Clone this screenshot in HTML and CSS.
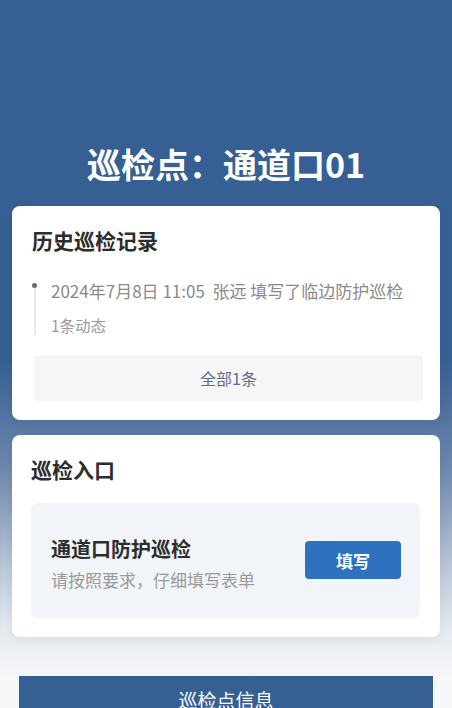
FILE: index.html
```html
<!DOCTYPE html>
<html lang="zh-CN">
<head>
<meta charset="utf-8">
<title>巡检点：通道口01</title>
<link rel="stylesheet" href="styles.css">
</head>
<body>
<div class="page">
  <header class="header">
    <h1 class="title">巡检点：通道口01</h1>
  </header>

  <section class="card card-history">
    <h2 class="card-title">历史巡检记录</h2>
    <div class="timeline">
      <div class="timeline-item">
        <span class="dot"></span>
        <div class="item-main">2024年7月8日 11:05&nbsp;&nbsp;张远 填写了临边防护巡检</div>
        <div class="item-sub">1条动态</div>
      </div>
    </div>
    <button class="all-btn" type="button">全部1条</button>
  </section>

  <section class="card card-entry">
    <h2 class="card-title">巡检入口</h2>
    <div class="entry-box">
      <div class="entry-text">
        <div class="entry-name">通道口防护巡检</div>
        <div class="entry-desc">请按照要求，仔细填写表单</div>
      </div>
      <button class="fill-btn" type="button">填写</button>
    </div>
  </section>

  <div class="info-bar">巡检点信息</div>
</div>
</body>
</html>
```

FILE: styles.css
```css
html, body {
  margin: 0;
  padding: 0;
}
body {
  font-family: "Noto Sans CJK SC", "Noto Sans", sans-serif;
  background: linear-gradient(to bottom, #365f93 0, #365f93 360px, #6f88ad 470px, #bcc8d9 570px, #e6eaf0 630px, #f6f7f9 680px, #f7f8fa 708px);
  min-height: 708px;
  overflow: hidden;
}
.page {
  display: flex;
  flex-direction: column;
}
.header {
  padding-top: 142px;
  padding-bottom: 20px;
}
.title {
  margin: 0;
  text-align: center;
  color: #ffffff;
  font-size: 34px;
  line-height: 44px;
  font-weight: 700;
}
.card {
  background: #ffffff;
  border-radius: 8px;
  margin: 0 12px;
  box-shadow: 0 4px 12px rgba(20, 40, 80, 0.06);
}
.card-history {
  padding: 20px 17px 19px 20px;
}
.card-entry {
  margin-top: 15px;
  padding: 20px 20px 19px 19px;
}
.card-title {
  margin: 0;
  font-size: 21px;
  line-height: 28px;
  font-weight: 700;
  color: #2d2d2d;
}
.timeline {
  margin-top: 24px;
}
.timeline-item {
  position: relative;
  padding-left: 19px;
}
.timeline-item::before {
  content: "";
  position: absolute;
  left: 2px;
  top: 10px;
  bottom: 2px;
  width: 2px;
  background: #e8e8e8;
}
.dot {
  position: absolute;
  left: 0;
  top: 5px;
  width: 5px;
  height: 5px;
  border-radius: 50%;
  background: #6b6b6b;
}
.item-main {
  font-size: 17px;
  line-height: 26px;
  color: #8a8a8a;
  white-space: nowrap;
}
.item-sub {
  margin-top: 9px;
  font-size: 15.5px;
  line-height: 24px;
  color: #9a9a9a;
}
.all-btn {
  display: block;
  box-sizing: border-box;
  width: calc(100% - 2px);
  margin: 18px 0 0 2px;
  height: 46px;
  border: none;
  border-radius: 4px;
  background: #f6f6f7;
  font-family: inherit;
  font-size: 16px;
  color: #5c6b8a;
  cursor: pointer;
}
.entry-box {
  margin-top: 20px;
  background: #f1f4f8;
  border-radius: 6px;
  padding: 32px 19px 26px 20px;
  display: flex;
  align-items: center;
  justify-content: space-between;
}
.entry-name {
  font-size: 20px;
  line-height: 28px;
  font-weight: 700;
  color: #2d2d2d;
}
.entry-desc {
  margin-top: 5px;
  font-size: 17px;
  line-height: 24px;
  color: #9a9a9a;
}
.fill-btn {
  width: 96px;
  height: 38px;
  margin-bottom: 7px;
  border: none;
  border-radius: 4px;
  background: #2e72bf;
  color: #ffffff;
  font-family: inherit;
  font-size: 17px;
  font-weight: 700;
  cursor: pointer;
}
.info-bar {
  margin: 39px 19px 0;
  height: 48px;
  line-height: 48px;
  background: #365f93;
  color: #ffffff;
  text-align: center;
  font-size: 19px;
}
```
